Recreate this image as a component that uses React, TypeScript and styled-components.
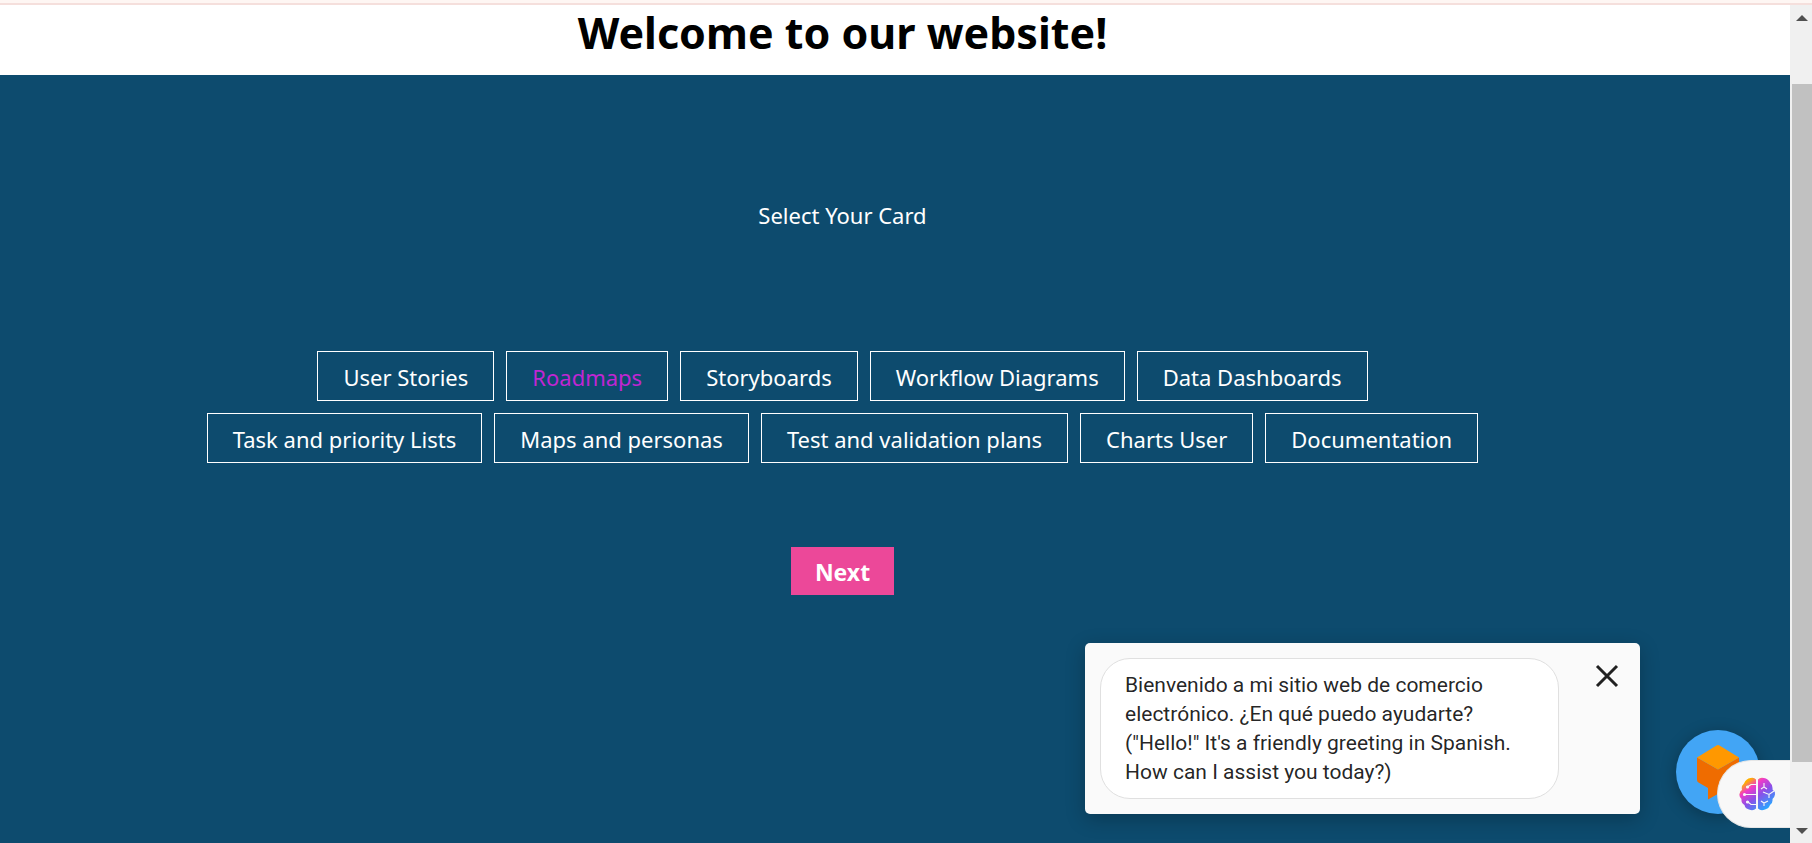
import React, { useState } from "react";
import styled, { createGlobalStyle } from "styled-components";

const sans = `"Segoe UI", "Noto Sans", "Open Sans", sans-serif`;

const GlobalStyle = createGlobalStyle`
  *, *::before, *::after { box-sizing: border-box; }
  body { margin: 0; background: #fff; font-family: ${sans}; }
  button { font: inherit; margin: 0; cursor: pointer; }
`;

const Frame = styled.div`
  display: flex;
  flex-direction: column;
  height: 100vh;
  overflow: hidden;
`;

const TopEdge = styled.div`
  flex: none;
  height: 5px;
  background: #fef6f3;
  border-bottom: 2px solid #f5dfdc;
`;

const Body = styled.div`
  display: flex;
  flex: 1;
  min-height: 0;
`;

const Page = styled.div`
  display: flex;
  flex-direction: column;
  flex: 1;
  min-width: 0;
`;

const Header = styled.header`
  flex: none;
  height: 70px;
  padding: 4px 105px 0 0;
`;

const Title = styled.h1`
  margin: 0;
  font-size: 43px;
  font-weight: 700;
  line-height: 48px;
  text-align: center;
  color: #000;
`;

const Main = styled.main`
  flex: 1;
  display: flex;
  flex-direction: column;
  align-items: center;
  padding: 124px 105px 0 0;
  background: #0d4b6e;
  color: #fff;
`;

const Prompt = styled.p`
  margin: 0 0 120px;
  font-size: 22px;
  line-height: 32px;
`;

const CardList = styled.div`
  display: flex;
  flex-wrap: wrap;
  justify-content: center;
  gap: 12px;
  width: 100%;
  max-width: 1300px;
`;

const CardOption = styled.button<{ $selected: boolean }>`
  padding: 9px 25px 7px;
  border: 1px solid #fff;
  background: transparent;
  color: ${(p) => (p.$selected ? "#c026d3" : "#fff")};
  font-size: 22px;
  line-height: 32px;
`;

const NextButton = styled.button`
  margin-top: 84px;
  padding: 9px 24px 7px;
  border: 0;
  background: #ec4899;
  color: #fff;
  font-size: 23px;
  font-weight: 700;
  line-height: 32px;
`;

const ScrollTrack = styled.div`
  flex: none;
  display: flex;
  flex-direction: column;
  width: 22px;
  padding-left: 2px;
  background: #f0f0f0;
`;

const ScrollArrow = styled.div`
  flex: none;
  display: flex;
  align-items: center;
  justify-content: center;
  height: 25px;
`;

const ScrollSpace = styled.div<{ $share: number; $thumb?: boolean }>`
  flex: ${(p) => p.$share} 1 0;
  background: ${(p) => (p.$thumb ? "#c1c1c1" : "transparent")};
`;

const ChatCard = styled.aside`
  position: fixed;
  right: 172px;
  bottom: 29px;
  display: flex;
  align-items: flex-start;
  justify-content: space-between;
  width: 555px;
  padding: 15px;
  border-radius: 5px;
  background: #fafafa;
  box-shadow: 0 5px 20px rgba(0, 0, 0, 0.24);
`;

const ChatBubble = styled.p`
  width: 459px;
  margin: 0;
  padding: 12px 24px 11px;
  border: 1px solid #e0e0e0;
  border-radius: 30px;
  background: #fff;
  color: rgba(0, 0, 0, 0.87);
  font-family: Roboto, sans-serif;
  font-size: 21px;
  line-height: 29px;
`;

const CloseButton = styled.button`
  display: flex;
  padding: 1px;
  border: 0;
  background: transparent;
`;

const Launcher = styled.button`
  position: fixed;
  right: 52px;
  bottom: 29px;
  width: 84px;
  height: 84px;
  padding: 0;
  border: 0;
  border-radius: 50%;
  background: #42a5f5;
  box-shadow: 0 3px 16px rgba(0, 0, 0, 0.28);
`;

const AssistantTab = styled.button`
  position: fixed;
  right: 22px;
  bottom: 15px;
  display: flex;
  align-items: center;
  width: 73px;
  height: 68px;
  padding: 0 0 0 20px;
  border: 1px solid #e6e6e6;
  border-right: 0;
  border-radius: 34px 0 0 34px;
  background: #f8f8f8;
`;

const cards = [
  "User Stories",
  "Roadmaps",
  "Storyboards",
  "Workflow Diagrams",
  "Data Dashboards",
  "Task and priority Lists",
  "Maps and personas",
  "Test and validation plans",
  "Charts User",
  "Documentation",
];

function CloseIcon() {
  return (
    <svg width="34" height="34" viewBox="0 0 34 34" fill="none" stroke="#212121" strokeWidth="3">
      <path d="M7 7 27 27M27 7 7 27" />
    </svg>
  );
}

function CubeIcon() {
  return (
    <svg width="84" height="84" viewBox="0 0 84 84">
      <path d="M21 27.5 42 39.5 63 27.5V52L32 69.5V58L22.5 52.5Q21 51.500 21 50Z" fill="#ef6c00" />
      <path d="M40.500 15.500Q42 14.500 43.500 15.500L63 27.500 42 39.500 21 27.500Z" fill="#ff9800" />
    </svg>
  );
}

function BrainIcon() {
  return (
    <svg width="38" height="34" viewBox="0 0 38 34">
      <defs>
        <linearGradient id="brain" x1="0.100" y1="0" x2="0.900" y2="1">
          <stop offset="0.120" stopColor="#ffb000" />
          <stop offset="0.300" stopColor="#f03bc8" />
          <stop offset="0.550" stopColor="#8b50e8" />
          <stop offset="0.900" stopColor="#2aa5ff" />
        </linearGradient>
      </defs>
      <path
        fill="url(#brain)"
        d="M18 2.500V31.500Q15 34.500 11 32.500Q7 31.500 6.500 28Q3 26.500 3.500 22Q1 20 1.500 17Q2 14 4 13Q3 9 6 6.500Q8 1.500 12.500 1Q16 0 18 2.500ZM20 2.500Q22 0 26 1Q30 1.500 32 5.500Q35 8 34.500 12.500Q37 14 37 17.500Q36.500 20.500 34.500 22Q35 26.500 32 28Q31 31.500 27 32.500Q23 34.500 20 31.500Z"
      />
      <g fill="none" stroke="#f8f8f8" strokeWidth="1.100">
        <path d="M10 9.500 13 7.500H18M7 17.500H18M10 25 13 27.500H18M26 6V10L23 12M26 10 29 12M25 15 31 17.500 36 14M31 17.500V21M23 24 26 26 30 24M26 26V29" />
        <g fill="#f8f8f8">
          <circle cx="9.500" cy="10" r="1" />
          <circle cx="6.500" cy="17.500" r="1" />
          <circle cx="9.500" cy="25" r="1" />
        </g>
      </g>
    </svg>
  );
}

function Arrow({ up }: { up?: boolean }) {
  return (
    <svg width="12" height="6" viewBox="0 0 12 6" fill="#505050">
      <path d={up ? "M6 0 12 6H0Z" : "M0 0H12L6 6Z"} />
    </svg>
  );
}

export default function App() {
  const [selected, setSelected] = useState("Roadmaps");
  const [chatOpen, setChatOpen] = useState(true);

  return (
    <>
      <GlobalStyle />
      <Frame>
        <TopEdge />
        <Body>
          <Page>
            <Header>
              <Title>Welcome to our website!</Title>
            </Header>
            <Main>
              <Prompt>Select Your Card</Prompt>
              <CardList>
                {cards.map((name) => (
                  <CardOption
                    key={name}
                    type="button"
                    $selected={name === selected}
                    aria-pressed={name === selected}
                    onClick={() => setSelected(name)}
                  >
                    {name}
                  </CardOption>
                ))}
              </CardList>
              <NextButton type="button">Next</NextButton>
            </Main>
          </Page>
          <ScrollTrack aria-hidden="true">
            <ScrollArrow><Arrow up /></ScrollArrow>
            <ScrollSpace $share={54} />
            <ScrollSpace $share={678} $thumb />
            <ScrollSpace $share={56} />
            <ScrollArrow><Arrow /></ScrollArrow>
          </ScrollTrack>
        </Body>
      </Frame>
      {chatOpen && (
        <ChatCard>
          <ChatBubble>
            Bienvenido a mi sitio web de comercio electrónico. ¿En qué puedo ayudarte? ("Hello!" It's a
            friendly greeting in Spanish. How can I assist you today?)
          </ChatBubble>
          <CloseButton type="button" aria-label="Close" onClick={() => setChatOpen(false)}>
            <CloseIcon />
          </CloseButton>
        </ChatCard>
      )}
      <Launcher type="button" aria-label="Open chat" onClick={() => setChatOpen(true)}>
        <CubeIcon />
      </Launcher>
      <AssistantTab type="button" aria-label="Assistant">
        <BrainIcon />
      </AssistantTab>
    </>
  );
}
